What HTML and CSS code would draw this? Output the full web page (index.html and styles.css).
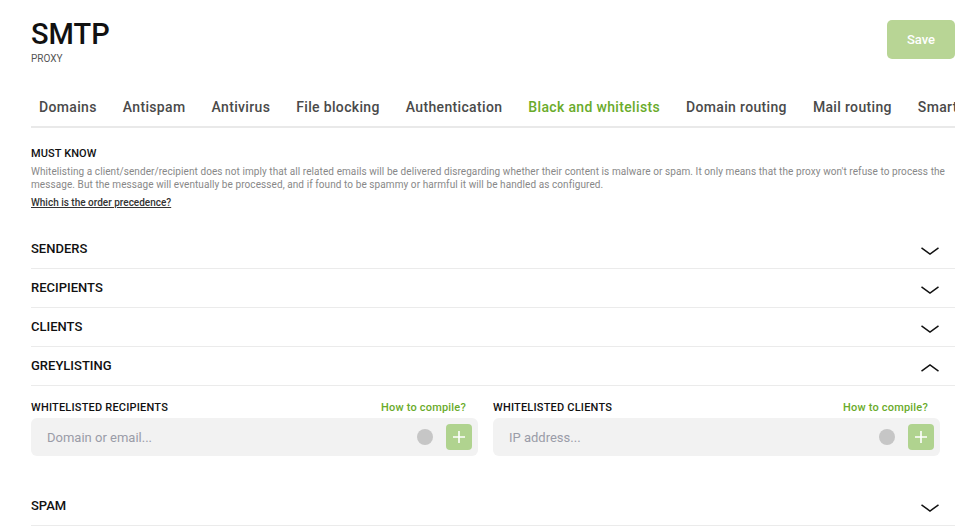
FILE: index.html
```html
<!DOCTYPE html>
<html lang="en">
<head>
    <meta charset="UTF-8">
    <meta name="viewport" content="width=device-width, initial-scale=1.0">
    <title>SMTP Proxy</title>
    <link rel="stylesheet" href="styles.css">
</head>
<body>
    <div class="page">
        <div class="header">
            <div class="title-block">
                <h1 class="title">SMTP</h1>
                <div class="subtitle">PROXY</div>
            </div>
            <button class="save-btn">Save</button>
        </div>

        <nav class="tabs">
            <a class="tab">Domains</a>
            <a class="tab">Antispam</a>
            <a class="tab">Antivirus</a>
            <a class="tab">File blocking</a>
            <a class="tab">Authentication</a>
            <a class="tab active">Black and whitelists</a>
            <a class="tab">Domain routing</a>
            <a class="tab">Mail routing</a>
            <a class="tab">Smart hosts</a>
        </nav>

        <div class="notice">
            <h3 class="notice-title">MUST KNOW</h3>
            <p class="notice-text">Whitelisting a client/sender/recipient does not imply that all related emails will be delivered disregarding whether their content is malware or spam. It only means that the proxy won't refuse to process the message. But the message will eventually be processed, and if found to be spammy or harmful it will be handled as configured.</p>
            <a class="notice-link" href="#">Which is the order precedence?</a>
        </div>

        <div class="accordion">
            <div class="acc-row">
                <span class="acc-title">SENDERS</span>
                <svg class="chevron" width="18" height="8" viewBox="0 0 18 8"><path d="M0.5 0.8 L9 7 L17.5 0.8" fill="none" stroke="#111" stroke-width="1.5"/></svg>
            </div>
            <div class="acc-row">
                <span class="acc-title">RECIPIENTS</span>
                <svg class="chevron" width="18" height="8" viewBox="0 0 18 8"><path d="M0.5 0.8 L9 7 L17.5 0.8" fill="none" stroke="#111" stroke-width="1.5"/></svg>
            </div>
            <div class="acc-row">
                <span class="acc-title">CLIENTS</span>
                <svg class="chevron" width="18" height="8" viewBox="0 0 18 8"><path d="M0.5 0.8 L9 7 L17.5 0.8" fill="none" stroke="#111" stroke-width="1.5"/></svg>
            </div>
            <div class="acc-row">
                <span class="acc-title">GREYLISTING</span>
                <svg class="chevron" width="18" height="8" viewBox="0 0 18 8"><path d="M0.5 7.2 L9 1 L17.5 7.2" fill="none" stroke="#111" stroke-width="1.5"/></svg>
            </div>
            <div class="acc-body">
                <div class="field">
                    <div class="field-head">
                        <span class="field-label">WHITELISTED RECIPIENTS</span>
                        <a class="help-link" href="#">How to compile?</a>
                    </div>
                    <div class="input-box">
                        <input type="text" placeholder="Domain or email...">
                        <span class="status-dot"></span>
                        <button class="add-btn">
                            <svg width="14" height="14" viewBox="0 0 14 14"><path d="M7 1 V13 M1 7 H13" stroke="#fff" stroke-width="1.6"/></svg>
                        </button>
                    </div>
                </div>
                <div class="field">
                    <div class="field-head">
                        <span class="field-label">WHITELISTED CLIENTS</span>
                        <a class="help-link" href="#">How to compile?</a>
                    </div>
                    <div class="input-box">
                        <input type="text" placeholder="IP address...">
                        <span class="status-dot"></span>
                        <button class="add-btn">
                            <svg width="14" height="14" viewBox="0 0 14 14"><path d="M7 1 V13 M1 7 H13" stroke="#fff" stroke-width="1.6"/></svg>
                        </button>
                    </div>
                </div>
            </div>
            <div class="acc-row">
                <span class="acc-title">SPAM</span>
                <svg class="chevron" width="18" height="8" viewBox="0 0 18 8"><path d="M0.5 0.8 L9 7 L17.5 0.8" fill="none" stroke="#111" stroke-width="1.5"/></svg>
            </div>
        </div>
    </div>
</body>
</html>
```

FILE: styles.css
```css
body {
    margin: 0;
    background: #fff;
    font-family: Roboto, "Liberation Sans", Arial, sans-serif;
    color: #111;
}
.page {
    padding: 0 9px 0 31px;
    overflow: hidden;
}
.header {
    display: flex;
    justify-content: space-between;
    align-items: flex-start;
    padding-top: 19px;
}
.title {
    margin: 0;
    font-size: 29px;
    line-height: 30px;
    font-weight: 500;
}
.subtitle {
    margin-top: 4px;
    font-size: 10px;
    line-height: 12px;
    color: #555;
}
.save-btn {
    margin-top: 1px;
    width: 68px;
    height: 39px;
    border: none;
    border-radius: 5px;
    background-color: #b8d595;
    color: #fff;
    font-family: inherit;
    font-size: 13px;
    font-weight: 500;
}
.tabs {
    display: flex;
    gap: 26px;
    margin-top: 24px;
    padding-left: 8px;
    border-bottom: 2px solid #e9e9e9;
    white-space: nowrap;
    overflow: hidden;
}
.tab {
    padding: 10px 0 11px;
    margin-bottom: -2px;
    font-size: 14px;
    line-height: 16px;
    font-weight: 500;
    letter-spacing: 0.34px;
    color: #4a4a4a;
    border-bottom: 2px solid transparent;
}
.tab.active {
    color: #6aab2b;
    border-bottom-color: #6aab2b;
}
.notice {
    margin-top: 19px;
}
.notice-title {
    margin: 0;
    font-size: 11px;
    line-height: 13px;
    font-weight: 500;
    letter-spacing: 0.1px;
}
.notice-text {
    margin: 5px 0 0;
    font-size: 10px;
    line-height: 13px;
    letter-spacing: 0.08px;
    color: #888;
}
.notice-link {
    display: inline-block;
    margin-top: 4px;
    font-size: 10px;
    line-height: 13px;
    font-weight: 500;
    color: #333;
}
.accordion {
    margin-top: 20px;
}
.acc-row {
    display: flex;
    justify-content: space-between;
    align-items: center;
    height: 36px;
    padding: 0 16px 2px 0;
    border-bottom: 1px solid #ebebeb;
}
.acc-title {
    font-size: 13px;
    font-weight: 500;
}
.chevron {
    margin-top: 5px;
}
.acc-body {
    display: grid;
    grid-template-columns: 1fr 1fr;
    gap: 15px;
    padding: 15px 15px 31px 0;
}
.field-head {
    display: flex;
    justify-content: space-between;
    padding-right: 12px;
    font-size: 11px;
    line-height: 13px;
    font-weight: 500;
}
.field-label {
    letter-spacing: 0.2px;
}
.help-link {
    color: #6aab2b;
    text-decoration: none;
    letter-spacing: 0.2px;
}
.input-box {
    display: flex;
    align-items: center;
    height: 38px;
    margin-top: 4px;
    padding: 0 6px 0 16px;
    background-color: #f2f2f2;
    border-radius: 6px;
}
.input-box input {
    flex: 1;
    min-width: 0;
    border: none;
    background: transparent;
    outline: none;
    padding: 0;
    font-family: inherit;
    font-size: 13px;
}
.input-box input::placeholder {
    color: #9a9ca8;
}
.status-dot {
    width: 16px;
    height: 16px;
    border-radius: 50%;
    background-color: #c6c6c6;
    margin-right: 13px;
}
.add-btn {
    display: flex;
    align-items: center;
    justify-content: center;
    width: 26px;
    height: 26px;
    padding: 0;
    border: none;
    border-radius: 4px;
    background-color: #b0d38f;
}
```
